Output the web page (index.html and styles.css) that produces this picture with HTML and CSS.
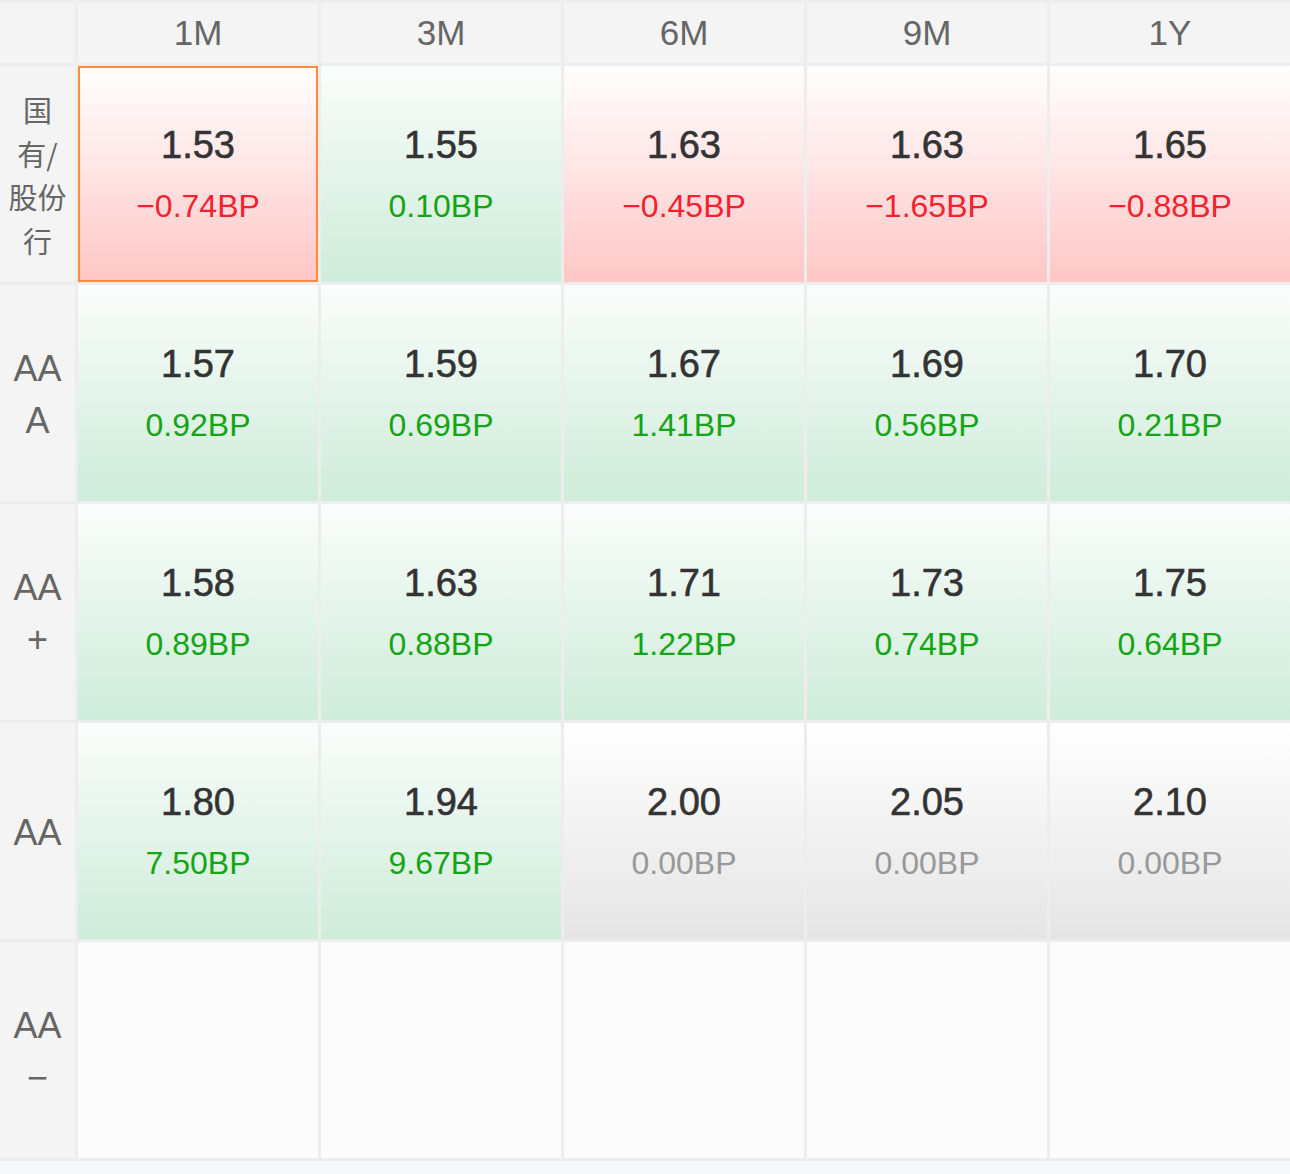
FILE: index.html
```html
<!DOCTYPE html>
<html lang="zh">
<head>
<meta charset="utf-8">
<title>收益率矩阵</title>
<link rel="stylesheet" href="styles.css">
</head>
<body>
<div class="matrix">
  <div class="corner"></div>
  <div class="head">1M</div>
  <div class="head">3M</div>
  <div class="head">6M</div>
  <div class="head">9M</div>
  <div class="head">1Y</div>

  <div class="label label-cn">国<br>有/<br>股份<br>行</div>
  <div class="cell down selected"><div class="val">1.53</div><div class="bp">−0.74BP</div></div>
  <div class="cell up"><div class="val">1.55</div><div class="bp">0.10BP</div></div>
  <div class="cell down"><div class="val">1.63</div><div class="bp">−0.45BP</div></div>
  <div class="cell down"><div class="val">1.63</div><div class="bp">−1.65BP</div></div>
  <div class="cell down"><div class="val">1.65</div><div class="bp">−0.88BP</div></div>

  <div class="label">AA<br>A</div>
  <div class="cell up"><div class="val">1.57</div><div class="bp">0.92BP</div></div>
  <div class="cell up"><div class="val">1.59</div><div class="bp">0.69BP</div></div>
  <div class="cell up"><div class="val">1.67</div><div class="bp">1.41BP</div></div>
  <div class="cell up"><div class="val">1.69</div><div class="bp">0.56BP</div></div>
  <div class="cell up"><div class="val">1.70</div><div class="bp">0.21BP</div></div>

  <div class="label">AA<br>+</div>
  <div class="cell up"><div class="val">1.58</div><div class="bp">0.89BP</div></div>
  <div class="cell up"><div class="val">1.63</div><div class="bp">0.88BP</div></div>
  <div class="cell up"><div class="val">1.71</div><div class="bp">1.22BP</div></div>
  <div class="cell up"><div class="val">1.73</div><div class="bp">0.74BP</div></div>
  <div class="cell up"><div class="val">1.75</div><div class="bp">0.64BP</div></div>

  <div class="label">AA</div>
  <div class="cell up"><div class="val">1.80</div><div class="bp">7.50BP</div></div>
  <div class="cell up"><div class="val">1.94</div><div class="bp">9.67BP</div></div>
  <div class="cell flat"><div class="val">2.00</div><div class="bp">0.00BP</div></div>
  <div class="cell flat"><div class="val">2.05</div><div class="bp">0.00BP</div></div>
  <div class="cell flat"><div class="val">2.10</div><div class="bp">0.00BP</div></div>

  <div class="label">AA<br>−</div>
  <div class="cell empty"></div>
  <div class="cell empty"></div>
  <div class="cell empty"></div>
  <div class="cell empty"></div>
  <div class="cell empty"></div>
</div>
</body>
</html>
```

FILE: styles.css
```css
html, body {
  margin: 0;
  padding: 0;
  background: #f7f8fa;
}
body {
  font-family: "Liberation Sans", "Noto Sans CJK SC", sans-serif;
  width: 1290px;
}
.matrix {
  display: grid;
  grid-template-columns: 75px repeat(5, 240px);
  grid-template-rows: 60px repeat(5, 216px);
  gap: 3px;
  padding: 3px 0;
  background: #ededed;
}
.corner, .head, .label {
  background: #f4f4f4;
}
.head {
  display: flex;
  align-items: center;
  justify-content: center;
  font-size: 35px;
  font-weight: 400;
  color: #666;
}
.label {
  display: flex;
  align-items: center;
  justify-content: center;
  text-align: center;
  font-size: 36px;
  line-height: 52px;
  padding-top: 4px;
  box-sizing: border-box;
  color: #666;
}
.label-cn {
  font-family: "Noto Sans CJK SC", sans-serif;
  font-size: 29px;
  line-height: 43.5px;
  padding-top: 2px;
}
.cell {
  display: flex;
  flex-direction: column;
  align-items: center;
  justify-content: center;
  gap: 15px;
  box-sizing: border-box;
}
.val {
  font-size: 38px;
  line-height: 49px;
  color: #333;
  -webkit-text-stroke: 0.6px #333;
}
.bp {
  font-size: 32px;
  line-height: 42px;
}
.down {
  background: linear-gradient(to bottom, #fffefe 0%, #ffe6e6 45%, #ffc6c6 100%);
}
.down .bp { color: #f5222d; }
.up {
  background: linear-gradient(to bottom, #fbfdfc 0%, #e6f5ec 45%, #cfecda 100%);
}
.up .bp { color: #14a514; }
.flat {
  background: linear-gradient(to bottom, #ffffff 0%, #f3f3f3 45%, #e5e5e5 100%);
}
.flat .bp { color: #999; }
.empty {
  background: #fcfcfc;
}
.selected {
  border: 2px solid #ff8a3d;
}
```
